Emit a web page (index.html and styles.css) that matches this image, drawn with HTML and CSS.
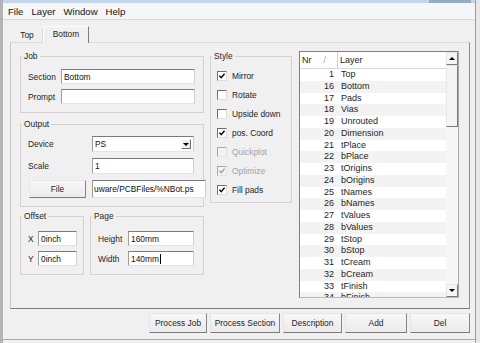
FILE: index.html
```html
<!DOCTYPE html>
<html lang="en">

<head>
    <meta charset="UTF-8">
    <meta name="viewport" content="width=device-width, initial-scale=1.0">
    <title>CAM Processor</title>
    <link rel="stylesheet" href="styles.css">
</head>

<body>
    <div class="window">
        <div class="titleBar"><span class="captionBtns"></span></div>
        <div class="menuBar">
            <span>File</span><span>Layer</span><span>Window</span><span>Help</span>
        </div>

        <div class="client">
            <div class="tabStrip">
                <span class="tab">Top</span>
                <span class="tab active">Bottom</span>
            </div>

            <div class="tabPanel">
                <div class="leftCol">
                    <fieldset class="group">
                        <legend>Job</legend>
                        <div class="groupBody jobBody">
                            <div class="row"><label>Section</label><input class="field" value="Bottom"></div>
                            <div class="row"><label>Prompt</label><input class="field" value=""></div>
                        </div>
                    </fieldset>

                    <fieldset class="group outputGroup">
                        <legend>Output</legend>
                        <div class="groupBody outputBody">
                            <div class="row tall">
                                <label>Device</label>
                                <div class="field combo">PS<span class="comboBtn"></span></div>
                            </div>
                            <div class="row tall"><label>Scale</label><input class="field" value="1"></div>
                            <div class="row fileRow">
                                <button class="btn fileBtn">File</button>
                                <input class="field" value="uware/PCBFiles/%NBot.ps">
                            </div>
                        </div>
                    </fieldset>

                    <div class="pairRow">
                        <fieldset class="group offsetGroup">
                            <legend>Offset</legend>
                            <div class="groupBody offsetBody">
                                <div class="row"><label>X</label><input class="field" value="0inch"></div>
                                <div class="row"><label>Y</label><input class="field" value="0inch"></div>
                            </div>
                        </fieldset>
                        <fieldset class="group pageGroup">
                            <legend>Page</legend>
                            <div class="groupBody pageBody">
                                <div class="row"><label>Height</label><input class="field" value="160mm"></div>
                                <div class="row"><label>Width</label><div class="field">140mm<span class="caret"></span></div></div>
                            </div>
                        </fieldset>
                    </div>
                </div>

                <fieldset class="group styleGroup">
                    <legend>Style</legend>
                    <div class="groupBody styleBody">
                        <label class="check"><span class="box"><svg viewBox="0 0 10 10"><path d="M1.8 4.6l2.2 2.6 4.2-5"/></svg></span>Mirror</label>
                        <label class="check"><span class="box"></span>Rotate</label>
                        <label class="check"><span class="box"></span>Upside down</label>
                        <label class="check"><span class="box"><svg viewBox="0 0 10 10"><path d="M1.8 4.6l2.2 2.6 4.2-5"/></svg></span>pos. Coord</label>
                        <label class="check disabled"><span class="box"></span>Quickplot</label>
                        <label class="check disabled"><span class="box"><svg viewBox="0 0 10 10"><path d="M1.8 4.6l2.2 2.6 4.2-5"/></svg></span>Optimize</label>
                        <label class="check"><span class="box"><svg viewBox="0 0 10 10"><path d="M1.8 4.6l2.2 2.6 4.2-5"/></svg></span>Fill pads</label>
                    </div>
                </fieldset>

                <div class="layerList">
                    <div class="listMain">
                        <div class="listHead">
                            <span class="colNr">Nr<i class="sortMark">/</i></span>
                            <span class="colName">Layer</span>
                        </div>
                        <div class="listRows">
                            <div class="lrow"><span class="nr">1</span><span>Top</span></div>
                            <div class="lrow"><span class="nr">16</span><span>Bottom</span></div>
                            <div class="lrow"><span class="nr">17</span><span>Pads</span></div>
                            <div class="lrow"><span class="nr">18</span><span>Vias</span></div>
                            <div class="lrow"><span class="nr">19</span><span>Unrouted</span></div>
                            <div class="lrow"><span class="nr">20</span><span>Dimension</span></div>
                            <div class="lrow"><span class="nr">21</span><span>tPlace</span></div>
                            <div class="lrow"><span class="nr">22</span><span>bPlace</span></div>
                            <div class="lrow"><span class="nr">23</span><span>tOrigins</span></div>
                            <div class="lrow"><span class="nr">24</span><span>bOrigins</span></div>
                            <div class="lrow"><span class="nr">25</span><span>tNames</span></div>
                            <div class="lrow"><span class="nr">26</span><span>bNames</span></div>
                            <div class="lrow"><span class="nr">27</span><span>tValues</span></div>
                            <div class="lrow"><span class="nr">28</span><span>bValues</span></div>
                            <div class="lrow"><span class="nr">29</span><span>tStop</span></div>
                            <div class="lrow"><span class="nr">30</span><span>bStop</span></div>
                            <div class="lrow"><span class="nr">31</span><span>tCream</span></div>
                            <div class="lrow"><span class="nr">32</span><span>bCream</span></div>
                            <div class="lrow"><span class="nr">33</span><span>tFinish</span></div>
                            <div class="lrow"><span class="nr">34</span><span>bFinish</span></div>
                        </div>
                    </div>
                    <div class="scrollBar">
                        <span class="sbBtn up"></span>
                        <span class="sbThumb"></span>
                        <span class="sbTrack"></span>
                        <span class="sbBtn down"></span>
                    </div>
                </div>
            </div>

            <div class="actions">
                <button class="btn" style="width: 58px">Process Job</button>
                <button class="btn" style="width: 70px">Process Section</button>
                <button class="btn" style="width: 59px">Description</button>
                <button class="btn" style="width: 62px">Add</button>
                <button class="btn" style="width: 60px">Del</button>
            </div>
        </div>

        <div class="statusBar"></div>
    </div>
</body>

</html>
```

FILE: styles.css
```css
* {
    margin: 0;
    padding: 0;
    box-sizing: border-box;
}

body {
    width: 480px;
    height: 343px;
    overflow: hidden;
    background-color: #e8e8e8;
    font-family: "Liberation Sans", Arial, sans-serif;
    font-size: 8.4px;
    color: #1e1e1e;
}

.window {
    width: 476px;
    height: 343px;
    background-color: #f0f0f0;
    border-left: 3px solid #b3b3b3;
    border-right: 1px solid #9c9c9c;
    display: flex;
    flex-direction: column;
}

.titleBar {
    height: 3px;
    background-color: #c3d6eb;
    display: flex;
    justify-content: flex-end;
}

.captionBtns {
    width: 42px;
    margin-right: 4px;
    background-color: #97abc3;
}

.menuBar {
    height: 17px;
    display: flex;
    align-items: center;
    padding-left: 1px;
    font-size: 9.6px;
    color: #111;
    background-color: #f5f6f7;
    border-bottom: 1px solid #d9d9d9;
}

.menuBar span {
    padding: 0 4px;
}

.client {
    flex: 1;
    display: flex;
    flex-direction: column;
    padding: 0 5px 0 7px;
}

/* tabs */
.tabStrip {
    height: 22px;
    display: flex;
    align-items: flex-end;
}

.tab {
    height: 14px;
    width: 31px;
    margin-left: 2px;
    display: flex;
    align-items: center;
    justify-content: center;
    border-right: 1px solid #dadada;
}

.tab.active {
    position: relative;
    z-index: 1;
    height: 17px;
    width: 46px;
    margin-left: 0;
    margin-bottom: -1px;
    padding-bottom: 2px;
    background-color: #f0f0f0;
    border-top: 1px solid #fdfdfd;
    border-left: 1px solid #fdfdfd;
    border-right: 1px solid #7d7d7d;
}

.tabPanel {
    height: 267px;
    display: flex;
    align-items: flex-start;
    padding: 8px 10px 0 9px;
    border-top: 1px solid #dcdcdc;
    border-left: 1px solid #c6c6c6;
    border-right: 1px solid #8c8c8c;
    border-bottom: 1px solid #7c7c7c;
}

/* group boxes */
.leftCol {
    width: 184px;
    display: flex;
    flex-direction: column;
}

.group {
    border: 1px solid #d2d2d2;
    min-width: 0;
}

.group legend {
    margin-left: 1px;
    padding: 0 2px;
    line-height: 10px;
}

.groupBody {
    display: flex;
    flex-direction: column;
    gap: 5px;
}

.row {
    height: 15px;
    display: flex;
    align-items: stretch;
}

.row label {
    display: flex;
    align-items: center;
    flex-shrink: 0;
}

.row.tall {
    height: 16px;
}

.jobBody {
    padding: 8px 8px 8px 7px;
}

.jobBody label {
    width: 33px;
}

.outputGroup {
    margin-top: 6px;
}

.outputBody {
    padding: 7px 9px 8px 7px;
    gap: 6px;
}

.outputBody label {
    width: 64px;
}

.fileRow {
    height: 18px;
}

.fileBtn {
    width: 57px;
    margin: 0 6px 0 1px;
}

.fileRow .field {
    margin-right: -12px;
    padding-left: 1px;
}

.pairRow {
    margin-top: 4px;
    display: flex;
    gap: 6px;
}

.offsetGroup {
    width: 64px;
}

.pageGroup {
    flex: 1;
}

.offsetBody {
    padding: 10px 6px 8px 7px;
}

.offsetBody label {
    width: 10px;
}

.pageBody {
    padding: 10px 9px 8px 7px;
}

.pageBody label {
    width: 30px;
}

.field {
    flex: 1;
    min-width: 0;
    display: flex;
    align-items: center;
    padding: 0 2px;
    font: inherit;
    color: #111;
    background-color: #fff;
    border: 1px solid;
    border-color: #7b7b7b #cfcfcf #e4e4e4 #9e9e9e;
    outline: none;
}

.caret {
    width: 1px;
    height: 10px;
    margin-left: 1px;
    background-color: #000;
}

.combo {
    justify-content: space-between;
}

.comboBtn {
    width: 10px;
    height: 10px;
    display: flex;
    align-items: center;
    justify-content: center;
    background-color: #eeeeee;
    border: 1px solid;
    border-color: #fdfdfd #6f6f6f #6f6f6f #fdfdfd;
}

.comboBtn::after {
    content: "";
    border-left: 3px solid transparent;
    border-right: 3px solid transparent;
    border-top: 3px solid #000;
}

.btn {
    height: 100%;
    font: inherit;
    color: #1e1e1e;
    background: linear-gradient(#f7f7f7, #ebebeb);
    border: 1px solid;
    border-color: #e6e6e6 #858585 #7a7a7a #e6e6e6;
}

/* style checkboxes */
.styleGroup {
    width: 82px;
    margin-left: 6px;
}

.styleBody {
    gap: 0;
    padding: 5px 0 3px 6px;
}

.check {
    height: 19px;
    display: flex;
    align-items: center;
    gap: 5px;
    white-space: nowrap;
}

.box {
    width: 10px;
    height: 10px;
    flex-shrink: 0;
    background-color: #fff;
    border: 1px solid;
    border-color: #6e6e6e #dcdcdc #dcdcdc #6e6e6e;
}

.box svg {
    display: block;
    width: 8px;
    height: 8px;
    fill: none;
    stroke: #000;
    stroke-width: 1.7;
}

.check.disabled {
    color: #a3a3a3;
}

.check.disabled .box {
    background-color: #f3f3f3;
    border-color: #a8a8a8 #e4e4e4 #e4e4e4 #a8a8a8;
}

.check.disabled svg {
    stroke: #a0a0a0;
}

/* layer list */
.layerList {
    width: 160px;
    height: 247px;
    margin-left: 7px;
    display: flex;
    background-color: #fff;
    border: 1px solid;
    border-color: #7f7f7f #a9a9a9 #b9b9b9 #7f7f7f;
    font-size: 9px;
}

.listMain {
    flex: 1;
    min-width: 0;
    display: flex;
    flex-direction: column;
}

.listHead {
    height: 17px;
    display: flex;
    border-bottom: 1px solid #d8d8d8;
}

.listHead span {
    display: flex;
    align-items: center;
}

.colNr {
    width: 38px;
    padding-left: 2px;
    border-right: 1px solid #cdcdcd;
}

.sortMark {
    margin-left: 12px;
    font-style: normal;
    color: #a8a8a8;
}

.colName {
    padding-left: 2px;
}

.listRows {
    flex: 1;
    overflow: hidden;
}

.lrow {
    height: 11.75px;
    line-height: 11.75px;
    display: flex;
    white-space: nowrap;
}

.lrow:nth-child(even) {
    background-color: #f3f3f3;
}

.nr {
    width: 34px;
    padding-right: 0;
    text-align: right;
    margin-right: 7px;
}

.scrollBar {
    width: 12px;
    display: flex;
    flex-direction: column;
    background-color: #f7f7f7;
}

.sbBtn {
    height: 13px;
    display: flex;
    align-items: center;
    justify-content: center;
    border: 1px solid;
    border-color: #e8e8e8 #7a7a7a #7a7a7a #e8e8e8;
    background-color: #f4f4f4;
}

.sbBtn::after {
    content: "";
    border-left: 3px solid transparent;
    border-right: 3px solid transparent;
}

.sbBtn.up::after {
    border-bottom: 3px solid #000;
}

.sbBtn.down::after {
    border-top: 3px solid #000;
}

.sbThumb {
    height: 62px;
    border: 1px solid;
    border-color: #e8e8e8 #7a7a7a #7a7a7a #e8e8e8;
    background-color: #f4f4f4;
}

.sbTrack {
    flex: 1;
}

/* bottom buttons */
.actions {
    height: 20px;
    margin-top: 4px;
    display: flex;
    justify-content: flex-end;
    gap: 3px;
}

.statusBar {
    flex: 1;
    margin-top: 6px;
    border-top: 1px solid #a8a8a8;
}
```
